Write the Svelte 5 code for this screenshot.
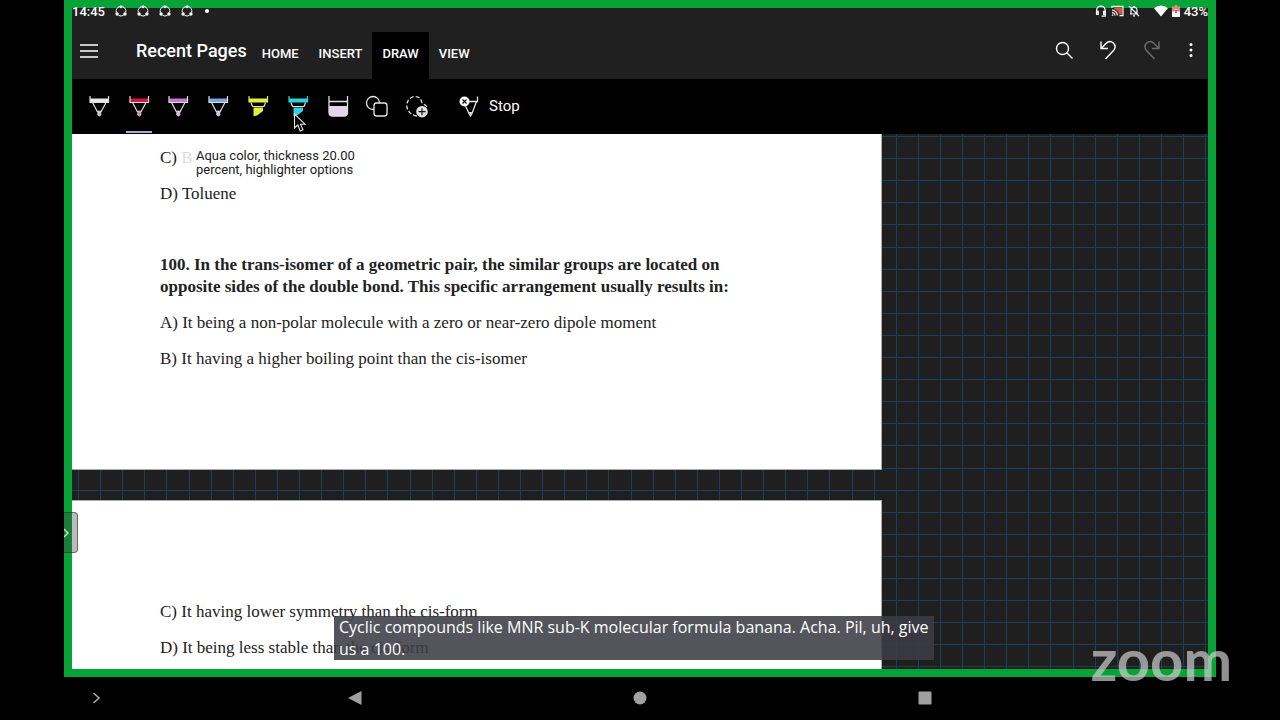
<script>
	const tabs = ['HOME', 'INSERT', 'DRAW', 'VIEW'];
	let activeTab = $state('DRAW');

	const pens = [
		{ name: 'White pen', color: '#e8e8e8', tip: '#c8c8c8' },
		{ name: 'Red pen', color: '#d3154a', tip: '#e58a9c' },
		{ name: 'Purple pen', color: '#c873d8', tip: '#e0b4e0' },
		{ name: 'Blue pen', color: '#76a9e4', tip: '#c4d4e4' }
	];
	const highlighters = [
		{ name: 'Yellow highlighter', color: '#e6ee3c' },
		{ name: 'Aqua highlighter', color: '#2fd3e0' }
	];
	let activePen = $state('Red pen');

	// ten grid cells fill one 221px tile
	const tile = 221;
	const steps = Array.from({ length: 10 }, (_, i) => Math.round((i * tile) / 10));
</script>

<div class="device">
	<div class="screen">
		<header>
			<div class="status">
				<span class="clock">14:45</span>
				{#each [1, 2, 3, 4] as n (n)}
					<svg width="12" height="12" viewBox="0 0 12 12">
						<path d="M1.300 7.500A4.800 4.800 0 0 1 4.500 1.600M7.500 1.600A4.800 4.800 0 0 1 10.700 7.500M3.500 10.300A4.800 4.800 0 0 0 8.500 10.300" fill="none" stroke="#fff" stroke-width="1" />
						<circle cx="6" cy="1.800" r="1.500" fill="#fff" />
						<circle cx="2.100" cy="9" r="1.700" fill="#fff" />
						<circle cx="9.900" cy="9" r="1.700" fill="#fff" />
					</svg>
				{/each}
				<span class="dot"></span>
				<div class="system">
					<svg width="12" height="12" viewBox="0 0 12 12" fill="none" stroke="#fff" stroke-width="1.3">
						<path d="M1.600 9V5.400a4.200 4.200 0 0 1 8.600 0v5.800H6.500" />
						<path d="M1.600 6.400h1.600v3H1.600zM8.600 6.400h1.600v3H8.600z" />
					</svg>
					<svg width="13" height="12" viewBox="0 0 13 12" fill="none" stroke="#fff" stroke-width="1.2">
						<path d="M3 3h8v6.400H8C7.500 6.500 6 4.500 3 4z" fill="#e5533c" stroke="none" />
						<path d="M1 3V1.400h11v9.200H8.500M1 5.200a5.400 5.400 0 0 1 5.400 5.400M1 7.600a3 3 0 0 1 3 3" />
						<circle cx="1.500" cy="10.300" r=".8" fill="#fff" stroke="none" />
					</svg>
					<svg class="bell" width="12" height="12" viewBox="0 0 12 12" fill="none" stroke="#fff" stroke-width="1.2">
						<path d="M2 9h8M3 9V5.500A3 3 0 0 1 6 2.200a3 3 0 0 1 3 3.300V9M6 2.200V1M5 10.800h2M1 1l10 10" />
					</svg>
					<svg width="14" height="12" viewBox="0 0 14 12"><path d="M0 3.200a10.500 10.500 0 0 1 14 0L7 11.500z" fill="#fff" /></svg>
					<svg width="8" height="12" viewBox="0 0 8 12">
						<path d="M2.500 0h3v1.500H8V12H0V1.500h2.500z" fill="#d98c86" />
						<path d="M0 6.500h2.500L4 3.500l1.500 3H8V12H0z" fill="#fff" />
						<path d="M3.200 5h1.600v3H3.200z" fill="#b33" />
					</svg>
					<span>43%</span>
				</div>
			</div>

			<div class="titlebar">
				<button class="menu" aria-label="Menu">
					<svg width="18" height="16" viewBox="0 0 18 16"><path d="M0 2h18M0 8h18M0 14h18" stroke="#fff" stroke-width="1.3" /></svg>
				</button>
				<h1>Recent Pages</h1>
				<nav class="tabs">
					{#each tabs as tab (tab)}
						<button class:active={tab === activeTab} onclick={() => (activeTab = tab)}>{tab}</button>
					{/each}
				</nav>
				<div class="actions">
					<button aria-label="Search">
						<svg width="20" height="20" viewBox="0 0 20 20" fill="none" stroke="#fff" stroke-width="1.4">
							<circle cx="8.500" cy="8.500" r="6" /><path d="M13 13l5.500 5.500" />
						</svg>
					</button>
					<button aria-label="Undo">
						<svg width="20" height="20" viewBox="0 0 20 20" fill="none" stroke="#fff" stroke-width="1.4">
							<path d="M3 1.500V8.500H10M3 8.500L8 3.500C10 1.500 13 1 15.300 3C17.800 5.300 17.600 8.300 15.500 10.500L7.500 19" />
						</svg>
					</button>
					<button aria-label="Redo" disabled>
						<svg width="20" height="20" viewBox="0 0 20 20" fill="none" stroke="#6c6c6c" stroke-width="1.4">
							<path d="M17 1.500V8.500H10M17 8.500L12 3.500C10 1.500 7 1 4.700 3C2.200 5.300 2.400 8.300 4.500 10.500L12.500 19" />
						</svg>
					</button>
					<button aria-label="More options">
						<svg width="20" height="20" viewBox="0 0 20 20" fill="#fff">
							<circle cx="10" cy="4.500" r="1.500" /><circle cx="10" cy="10" r="1.500" /><circle cx="10" cy="15.500" r="1.500" />
						</svg>
					</button>
				</div>
			</div>
		</header>

		<div class="ribbon">
			<div class="tools">
				{#each pens as pen (pen.name)}
					<button aria-label={pen.name} class:active={pen.name === activePen} onclick={() => (activePen = pen.name)}>
						<svg width="24" height="24" viewBox="0 0 24 24">
							<path d="M3 4.500h18.500v4H3z" fill={pen.color} />
							<path d="M3 2v6.500h18.500V2M5.500 8.500l5 9.500M19 8.500l-5 9.500" fill="none" stroke="#dedede" stroke-width="1.200" />
							<path d="M10.700 17h3.200v4l-1.600 1.200-1.600-1.200z" fill={pen.tip} stroke="#dedede" stroke-width=".7" />
						</svg>
					</button>
				{/each}
				{#each highlighters as pen (pen.name)}
					<button aria-label={pen.name} class:active={pen.name === activePen} onclick={() => (activePen = pen.name)}>
						<svg width="24" height="24" viewBox="0 0 24 24">
							<path d="M3 4.500h18.500v3.500H3z" fill={pen.color} />
							<path d="M3 2v6h18.500V2" fill="none" stroke={pen.color} stroke-width="1.200" />
							<path d="M5 8.500l1.500 4h11.500l1.500-4" fill="none" stroke="#dedede" stroke-width="1.200" />
							<path d="M7.500 13.500h9.500v3.500L11 21.500l-3.500.8z" fill={pen.color} />
						</svg>
					</button>
				{/each}
				<button aria-label="Eraser">
					<svg width="24" height="24" viewBox="0 0 24 24">
						<path d="M3 12h18.500v6.500q0 3.500-3.500 3.500H6.500q-3.500 0-3.500-3.500z" fill="#e6d5e8" />
						<path d="M3 2v16.500Q3 22 6.500 22h11.500q3.500 0 3.500-3.500V2M3 7.500h18.500" fill="none" stroke="#e4dfe6" stroke-width="1.300" />
					</svg>
				</button>
				<button aria-label="Shapes">
					<svg width="24" height="24" viewBox="0 0 24 24" stroke="#e6e6e6" stroke-width="1.300">
						<circle cx="8" cy="9" r="6.500" fill="none" />
						<rect x="9" y="9" width="13" height="13" rx="2.500" fill="#000" />
					</svg>
				</button>
				<button aria-label="Lasso select">
					<svg width="24" height="24" viewBox="0 0 24 24">
						<path d="M12 22C5 21 1.500 16 1.800 11S6 2.500 10 2.500s6 2 6.500 5 5 3 5.500 6" fill="none" stroke="#e6e6e6" stroke-width="1.300" stroke-dasharray="4 2" />
						<circle cx="17" cy="17.700" r="5.800" fill="#e4e4e4" />
						<path d="M17 14.200v7M13.500 17.700h7" stroke="#111" stroke-width="1.200" />
					</svg>
				</button>
			</div>
			<button class="stop">
				<svg width="24" height="24" viewBox="0 0 24 24">
					<path d="M19.500 2.500v5H10M7.500 12l3.500 7.500L12.500 22l1.500-2.500L18.500 7.500" fill="none" stroke="#e6e6e6" stroke-width="1.300" />
					<path d="M10.700 18h3.600L12.500 22z" fill="#ddd" />
					<circle cx="6.500" cy="7.500" r="5" fill="#fff" />
					<path d="M4.500 5.500l4 4M8.500 5.500l-4 4" stroke="#000" stroke-width="1.200" />
				</svg>
				Stop
			</button>
			<svg class="cursor" width="14" height="20" viewBox="0 0 14 20">
				<path d="M1.500 1v14l3.300-3 2.400 6 2.800-1.200-2.500-5.600H12z" fill="#000" stroke="#e8e8e8" stroke-width="1.100" />
			</svg>
		</div>

		<main>
			<svg class="grid" width="100%" height="100%">
				<defs>
					<pattern id="ruled" x="6" y="2" width={tile} height={tile} patternUnits="userSpaceOnUse">
						{#each steps as s (s)}
							<path d="M{s} 0h1v{tile}h-1zM0 {s}h{tile}v1H0z" fill="#1f3f59" />
						{/each}
					</pattern>
				</defs>
				<rect width="100%" height="100%" fill="url(#ruled)" />
			</svg>

			<section class="page first">
				<p>C) <span class="faded">Be</span></p>
				<p>D) Toluene</p>
				<p class="question">
					<b>100. In the trans-isomer of a geometric pair, the similar groups are located on<br />opposite sides of the double bond. This specific arrangement usually results in:</b>
				</p>
				<p>A) It being a non-polar molecule with a zero or near-zero dipole moment</p>
				<p>B) It having a higher boiling point than the cis-isomer</p>
				<div class="tooltip" role="tooltip">Aqua color, thickness 20.00<br />percent, highlighter options</div>
			</section>
			<section class="page second">
				<p>C) It having lower symmetry than the cis-form</p>
				<p>D) It being less stable than the cis-form</p>
			</section>
		</main>

		<button class="handle" aria-label="Open side panel">
			<svg width="6" height="10" viewBox="0 0 6 10"><path d="M0 1l4 4-4 4" fill="none" stroke="#b8f0c4" stroke-width="1.400" /></svg>
		</button>
		<div class="caption">Cyclic compounds like MNR sub-K molecular formula banana. Acha. Pil, uh, give<br />us a 100.</div>
	</div>

	<footer>
		<button class="chevron" aria-label="Expand">
			<svg width="10" height="14" viewBox="0 0 10 14"><path d="M1.500 2L7 7l-5.500 5" fill="none" stroke="#a8a8a8" stroke-width="1.600" /></svg>
		</button>
		<button aria-label="Back">
			<svg width="14" height="14" viewBox="0 0 14 14"><path d="M13.500 0v14L0 7z" fill="#a0a0a0" /></svg>
		</button>
		<button aria-label="Home">
			<svg width="14" height="14" viewBox="0 0 14 14"><circle cx="7" cy="7" r="6.500" fill="#a0a0a0" /></svg>
		</button>
		<button aria-label="Overview">
			<svg width="14" height="14" viewBox="0 0 14 14"><rect x=".5" y=".5" width="13" height="13" rx="1" fill="#a0a0a0" /></svg>
		</button>
	</footer>
	<div class="watermark">zoom</div>
</div>

<style>
	:global(body) {
		margin: 0;
		background: #000;
	}
	.device {
		position: relative;
		display: flex;
		flex-direction: column;
		height: 100vh;
		overflow: hidden;
		background: #000;
		color: #fff;
		font-family: Roboto, sans-serif;
	}
	button {
		display: flex;
		align-items: center;
		justify-content: center;
		padding: 0;
		border: 0;
		background: none;
		color: inherit;
		font: inherit;
		cursor: pointer;
	}
	svg {
		display: block;
		flex: none;
	}
	.screen {
		position: relative;
		display: flex;
		flex: 1;
		flex-direction: column;
		min-height: 0;
		margin: 0 64px;
		border: 8px solid #07a336;
	}
	header {
		background: #202020;
	}
	.status {
		display: flex;
		align-items: center;
		gap: 10px;
		height: 22px;
		margin-top: -8px;
		font-size: 13px;
		font-weight: 500;
	}
	.dot {
		width: 4px;
		height: 4px;
		margin-left: 2px;
		border-radius: 50%;
		background: #fff;
	}
	.system {
		display: flex;
		align-items: center;
		gap: 4px;
		margin-left: auto;
	}
	.bell {
		margin-right: 10px;
	}
	.titlebar {
		display: flex;
		align-items: center;
		height: 57px;
	}
	.menu {
		width: 34px;
		height: 40px;
	}
	h1 {
		margin: 0 5px 0 30px;
		font-size: 18px;
		font-weight: 500;
		line-height: 24px;
		white-space: nowrap;
	}
	.tabs {
		display: flex;
		align-self: flex-end;
	}
	.tabs button {
		height: 47px;
		padding: 0 10px 4px;
		font-size: 13px;
		font-weight: 500;
	}
	.tabs .active {
		background: #000;
	}
	.actions {
		display: flex;
		margin-left: auto;
	}
	.actions button {
		width: 44px;
		height: 40px;
		padding-bottom: 2px;
	}
	.actions button:last-child {
		width: 34px;
	}
	.ribbon {
		position: relative;
		display: flex;
		height: 55px;
		background: #000;
	}
	.tools {
		display: grid;
		grid-template-columns: repeat(9, 1fr);
		width: 358px;
		margin-left: 7px;
	}
	.tools button {
		position: relative;
		padding-bottom: 2px;
	}
	.tools .active::after {
		content: '';
		position: absolute;
		bottom: 1px;
		width: 26px;
		height: 2px;
		background: #b3a6d6;
	}
	.stop {
		gap: 7px;
		margin-left: 21px;
		padding-bottom: 2px;
		font-size: 15px;
	}
	.cursor {
		position: absolute;
		top: 34px;
		left: 221px;
	}
	main {
		position: relative;
		flex: 1;
		min-height: 0;
		overflow: hidden;
		background: #201f1f;
	}
	.grid {
		position: absolute;
		inset: 0;
	}
	.page {
		position: relative;
		box-sizing: border-box;
		width: 810px;
		max-width: 100%;
		padding: 0 88px;
		border-right: 1px solid #aaa;
		border-bottom: 1px solid #aaa;
		background: #fff;
		color: #222;
		font-family: 'Liberation Serif', serif;
		font-size: 17px;
		line-height: 22px;
	}
	.page p {
		margin: 0 0 14px;
		white-space: nowrap;
	}
	.first {
		padding-top: 13px;
		padding-bottom: 85px;
	}
	.second {
		margin-top: 30px;
		padding-top: 100px;
		padding-bottom: 40px;
		border-top: 1px solid #aaa;
	}
	.page .question {
		margin-top: 49px;
	}
	.faded {
		color: #ddd;
	}
	.tooltip {
		position: absolute;
		top: 12px;
		left: 120px;
		padding: 3px 4px;
		background: rgba(255, 255, 255, 0.6);
		color: #222;
		font-family: Roboto, sans-serif;
		font-size: 13px;
		line-height: 14px;
		white-space: nowrap;
	}
	.handle {
		position: absolute;
		bottom: 116px;
		left: -8px;
		box-sizing: border-box;
		justify-content: flex-start;
		width: 14px;
		height: 41px;
		border: 1px solid rgba(50, 50, 50, 0.6);
		border-left: 0;
		border-radius: 0 4px 4px 0;
		background: rgba(60, 60, 60, 0.35);
	}
	.caption {
		position: absolute;
		bottom: 9px;
		left: 262px;
		padding: 0 5px;
		background: rgba(60, 60, 70, 0.88);
		font-family: 'Open Sans', 'Noto Sans', sans-serif;
		font-size: 16px;
		font-weight: 500;
		line-height: 22px;
		white-space: nowrap;
	}
	footer {
		display: grid;
		grid-template-columns: 212px 1fr 1fr 1fr 212px;
		height: 43px;
	}
	footer button {
		padding-bottom: 2px;
	}
	footer .chevron {
		justify-content: flex-start;
		padding-left: 92px;
	}
	.watermark {
		position: absolute;
		right: 48px;
		bottom: 32px;
		color: rgba(205, 205, 205, 0.7);
		font-family: Lato, sans-serif;
		font-size: 58px;
		font-weight: 700;
		line-height: 58px;
	}
</style>
